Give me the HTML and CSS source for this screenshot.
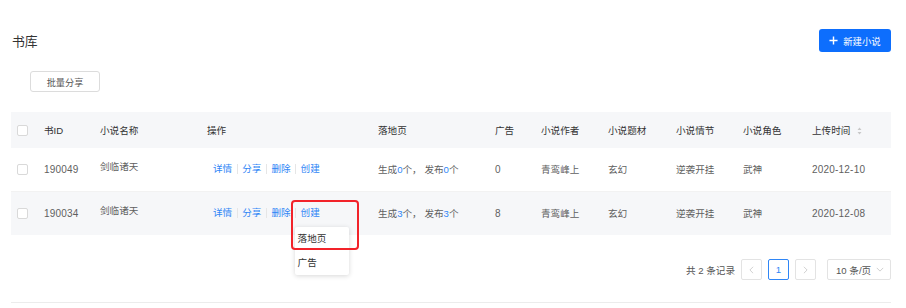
FILE: index.html
```html
<!DOCTYPE html>
<html lang="zh">
<head>
<meta charset="utf-8">
<title>书库</title>
<link rel="stylesheet" href="styles.css">
</head>
<body>
<div class="page">
  <div class="head">
    <h1 class="title">书库</h1>
    <button class="btn-primary"><svg class="plus" viewBox="0 0 10 10" width="9" height="9"><path d="M5 0.5V9.5M0.5 5H9.5" stroke="#fff" stroke-width="1.6"/></svg>新建小说</button>
  </div>
  <div class="toolbar">
    <button class="btn">批量分享</button>
  </div>
  <table class="grid">
    <colgroup>
      <col style="width:27px"><col style="width:56px"><col style="width:107px"><col style="width:171px"><col style="width:117px"><col style="width:46px"><col style="width:67px"><col style="width:68px"><col style="width:67px"><col style="width:69px"><col style="width:85px">
    </colgroup>
    <thead>
      <tr>
        <th><span class="check"></span></th>
        <th>书ID</th>
        <th>小说名称</th>
        <th>操作</th>
        <th>落地页</th>
        <th>广告</th>
        <th>小说作者</th>
        <th>小说题材</th>
        <th>小说情节</th>
        <th>小说角色</th>
        <th>上传时间<span class="sorter"><svg viewBox="0 0 6 10" width="5" height="8"><path d="M3 0.5L5.5 3.8H0.5Z M3 9.5L5.5 6.2H0.5Z" fill="#c8c8c8"/></svg></span></th>
      </tr>
    </thead>
    <tbody>
      <tr>
        <td><span class="check"></span></td>
        <td class="num">190049</td>
        <td class="name">剑临诸天</td>
        <td><div class="actions"><a>详情</a><i class="sep"></i><a>分享</a><i class="sep"></i><a>删除</a><i class="sep"></i><a>创建</a></div></td>
        <td>生成<em>0</em>个， 发布<em>0</em>个</td>
        <td class="num">0</td>
        <td>青鸾峰上</td>
        <td>玄幻</td>
        <td>逆袭开挂</td>
        <td>武神</td>
        <td class="num">2020-12-10</td>
      </tr>
      <tr class="hover">
        <td><span class="check"></span></td>
        <td class="num">190034</td>
        <td class="name">剑临诸天</td>
        <td><div class="actions"><a>详情</a><i class="sep"></i><a>分享</a><i class="sep"></i><a>删除</a><i class="sep"></i><span class="anchor"><a>创建</a><span class="mark"></span><span class="menu"><span class="item">落地页</span><span class="item">广告</span></span></span></div></td>
        <td>生成<em>3</em>个， 发布<em>3</em>个</td>
        <td class="num">8</td>
        <td>青鸾峰上</td>
        <td>玄幻</td>
        <td>逆袭开挂</td>
        <td>武神</td>
        <td class="num">2020-12-08</td>
      </tr>
    </tbody>
  </table>
  <div class="pager">
    <span class="total">共 2 条记录</span>
    <span class="pbtn"><svg viewBox="0 0 6 10" width="5" height="8"><path d="M5 1L1 5L5 9" fill="none" stroke="#c5c5c5" stroke-width="1"/></svg></span>
    <span class="pbtn active">1</span>
    <span class="pbtn"><svg viewBox="0 0 6 10" width="5" height="8"><path d="M1 1L5 5L1 9" fill="none" stroke="#c5c5c5" stroke-width="1"/></svg></span>
    <span class="size">10 条/页<svg viewBox="0 0 10 6" width="8" height="5"><path d="M1 1L5 5L9 1" fill="none" stroke="#c5c5c5" stroke-width="1"/></svg></span>
  </div>
  <div class="rule"></div>
</div>
</body>
</html>
```
FILE: styles.css
```css
* { box-sizing: border-box; }
html, body { margin: 0; padding: 0; background: #fff; }
body {
  font-family: "Liberation Sans", "Noto Sans CJK SC", sans-serif;
  font-size: 9.6px;
  color: #5f5f5f;
}
.page { padding: 0 15px 0 11px; }
.head {
  margin-top: 29px;
  height: 23px;
  display: flex;
  align-items: center;
  justify-content: space-between;
}
.title {
  margin: 0 0 0 1px;
  font-size: 12.8px;
  font-weight: normal;
  color: #333;
}
.btn-primary {
  width: 72px;
  height: 23px;
  border: none;
  border-radius: 3px;
  background: #0d6efd;
  color: #fff;
  font: inherit;
  font-size: 9.4px;
  display: flex;
  align-items: center;
  justify-content: center;
  gap: 5px;
  padding: 0;
}
.toolbar { margin-top: 19px; padding-left: 19px; }
.btn {
  width: 70px;
  height: 21px;
  border: 1px solid #dcdcdc;
  border-radius: 3px;
  background: #fff;
  color: #555;
  font: inherit;
  font-size: 9.2px;
  padding: 0;
}
.grid {
  margin-top: 20px;
  width: 880px;
  table-layout: fixed;
  border-collapse: collapse;
}
.grid th, .grid td {
  padding: 0 0 0 6px;
  text-align: left;
  white-space: nowrap;
  vertical-align: middle;
}
.grid th {
  height: 36px;
  background: #f6f7f9;
  font-weight: normal;
  color: #333;
}
.grid td { height: 43px; color: #5f5f5f; }
.grid td.num { font-size: 10px; letter-spacing: 0.2px; }
.grid tbody tr:first-child td { border-bottom: 1px solid #f2f2f2; }
.grid tr.hover td { height: 44px; background: #f6f7f9; }
.grid td.name { padding-bottom: 6px; }
.check {
  display: block;
  width: 11px;
  height: 11px;
  border: 1px solid #d9d9d9;
  border-radius: 2px;
  background: #fff;
}
.sorter { display: inline-block; margin-left: 7px; vertical-align: -1px; }
.actions {
  padding-left: 6px;
  display: flex;
  align-items: center;
  line-height: 14px;
}
.actions a { color: #2f86f6; }
em { font-style: normal; color: #2f86f6; }
.sep {
  display: block;
  width: 1px;
  height: 10px;
  background: #e6e6e6;
  margin: 0 4.5px;
}
.anchor { position: relative; display: block; }
.mark {
  position: absolute;
  left: -10px;
  top: -6px;
  width: 68px;
  height: 50px;
  border: 2px solid #f2232a;
  border-radius: 4px;
  z-index: 2;
}
.menu {
  position: absolute;
  left: -6px;
  top: 21px;
  width: 54px;
  background: #fff;
  box-shadow: 0 1px 5px rgba(0,0,0,0.16);
  border-radius: 2px;
  z-index: 1;
}
.item {
  display: block;
  height: 24px;
  line-height: 24px;
  padding-left: 3px;
  color: #333;
}
.pager {
  margin-top: 24px;
  height: 21px;
  display: flex;
  align-items: center;
  justify-content: flex-end;
  color: #555;
}
.total { margin-right: 6px; }
.pbtn {
  width: 21px;
  height: 21px;
  border: 1px solid #e3e3e3;
  border-radius: 2px;
  margin-right: 6px;
  display: flex;
  align-items: center;
  justify-content: center;
  color: #2f86f6;
}
.pbtn.active { border-color: #2f86f6; }
.size {
  margin-left: 5px;
  width: 64px;
  height: 21px;
  border: 1px solid #e3e3e3;
  border-radius: 2px;
  display: flex;
  align-items: center;
  justify-content: space-between;
  padding: 0 6px 0 8px;
}
.rule {
  margin-top: 22px;
  height: 1px;
  background: #ececec;
}
```
